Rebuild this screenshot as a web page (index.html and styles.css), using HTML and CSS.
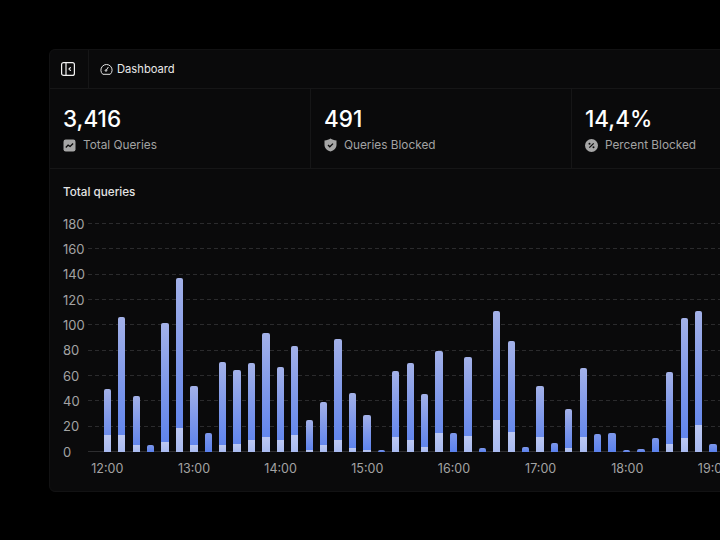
FILE: index.html
```html
<!DOCTYPE html>
<html lang="en">

<head>
    <meta charset="UTF-8">
    <title>Dashboard</title>
    <link rel="stylesheet" href="styles.css">
</head>

<body>
    <div class="card">
        <header class="topbar">
            <div class="toggle">
                <svg width="14" height="14" viewBox="0 0 14 14" fill="none" stroke="#f2f2f2" stroke-width="1.2">
                    <rect x="0.6" y="0.6" width="12.8" height="12.8" rx="2"></rect>
                    <path d="M5 1v12"></path>
                    <path d="M9.4 5.6 8 7l1.4 1.4" stroke-linecap="round" stroke-linejoin="round"></path>
                </svg>
            </div>
            <div class="crumb">
                <svg width="13" height="13" viewBox="0 0 13 13" fill="none" stroke="#e4e4e4" stroke-width="1">
                    <path d="M2.800 11.300a5.600 5.600 0 1 1 7.400 0z" stroke-linejoin="round"></path>
                    <path d="M8.200 4.300 6.400 7" stroke-linecap="round"></path>
                    <circle cx="6" cy="7.500" r="0.800"></circle>
                </svg>
                <span>Dashboard</span>
            </div>
        </header>

        <section class="stats">
            <div class="stat">
                <div class="stat-value">3,416</div>
                <div class="stat-label">
                    <svg width="13" height="13" viewBox="-0.5 -0.5 13 13">
                        <rect width="12" height="12" rx="2.200" fill="#a6a6a6"></rect>
                        <path d="M2.300 8 4.600 5.600l2 1.400 3-3" fill="none" stroke="#0a0a0b" stroke-width="1.300"></path>
                    </svg>
                    <span>Total Queries</span>
                </div>
            </div>
            <div class="stat">
                <div class="stat-value">491</div>
                <div class="stat-label">
                    <svg width="13" height="14" viewBox="0 0 13 14">
                        <path d="M6.500 0.500c1.600 1.200 3.600 1.800 6 2v4.200c0 3.300-2.300 5.800-6 6.800-3.700-1-6-3.500-6-6.800V2.500c2.400-.2 4.400-.8 6-2z" fill="#a6a6a6"></path>
                        <path d="M4 7l1.800 1.800L9 5.600" fill="none" stroke="#0a0a0b" stroke-width="1.300"></path>
                    </svg>
                    <span>Queries Blocked</span>
                </div>
            </div>
            <div class="stat">
                <div class="stat-value">14,4%</div>
                <div class="stat-label">
                    <svg width="13" height="13" viewBox="0 0 13 13">
                        <circle cx="6.500" cy="6.500" r="6.500" fill="#a6a6a6"></circle>
                        <path d="M4.300 8.700l4.400-4.400" stroke="#0a0a0b" stroke-width="1.200"></path>
                        <circle cx="4.500" cy="4.700" r="1" fill="#0a0a0b"></circle>
                        <circle cx="8.500" cy="8.300" r="1" fill="#0a0a0b"></circle>
                    </svg>
                    <span>Percent Blocked</span>
                </div>
            </div>
        </section>

        <section class="chart">
            <h2 class="chart-title">Total queries</h2>
            <div class="plot">
                <div class="row"><span>180</span><i></i></div>
                <div class="row"><span>160</span><i></i></div>
                <div class="row"><span>140</span><i></i></div>
                <div class="row"><span>120</span><i></i></div>
                <div class="row"><span>100</span><i></i></div>
                <div class="row"><span>80</span><i></i></div>
                <div class="row"><span>60</span><i></i></div>
                <div class="row"><span>40</span><i></i></div>
                <div class="row"><span>20</span><i></i></div>
                <div class="row zero"><span>0</span><i></i></div>

                <div class="bars">
                    <div class="bar" style="height:62.7px"><b style="height:16.7px"></b></div>
                    <div class="bar" style="height:134.7px"><b style="height:16.7px"></b></div>
                    <div class="bar" style="height:56px"><b style="height:6.7px"></b></div>
                    <div class="bar short" style="height:6.7px"></div>
                    <div class="bar" style="height:128.7px"><b style="height:9.3px"></b></div>
                    <div class="bar" style="height:173.7px"><b style="height:24px"></b></div>
                    <div class="bar" style="height:66px"><b style="height:6.7px"></b></div>
                    <div class="bar short" style="height:18.3px"></div>
                    <div class="bar" style="height:89.7px"><b style="height:6.7px"></b></div>
                    <div class="bar" style="height:81.7px"><b style="height:8px"></b></div>
                    <div class="bar" style="height:88.7px"><b style="height:12px"></b></div>
                    <div class="bar" style="height:118.7px"><b style="height:15px"></b></div>
                    <div class="bar" style="height:85px"><b style="height:12px"></b></div>
                    <div class="bar" style="height:105.7px"><b style="height:16.7px"></b></div>
                    <div class="bar" style="height:31.7px"><b style="height:1.3px"></b></div>
                    <div class="bar" style="height:49.7px"><b style="height:6.7px"></b></div>
                    <div class="bar" style="height:113px"><b style="height:12px"></b></div>
                    <div class="bar" style="height:58.7px"><b style="height:4px"></b></div>
                    <div class="bar" style="height:36.3px"><b style="height:1.3px"></b></div>
                    <div class="bar short" style="height:2px"></div>
                    <div class="bar" style="height:80.7px"><b style="height:15px"></b></div>
                    <div class="bar" style="height:88.7px"><b style="height:12px"></b></div>
                    <div class="bar" style="height:57.7px"><b style="height:5px"></b></div>
                    <div class="bar" style="height:100.7px"><b style="height:18.3px"></b></div>
                    <div class="bar short" style="height:19px"></div>
                    <div class="bar" style="height:95px"><b style="height:15.7px"></b></div>
                    <div class="bar short" style="height:3.7px"></div>
                    <div class="bar" style="height:140.3px"><b style="height:32px"></b></div>
                    <div class="bar" style="height:110.3px"><b style="height:19.3px"></b></div>
                    <div class="bar short" style="height:4.7px"></div>
                    <div class="bar" style="height:66px"><b style="height:15px"></b></div>
                    <div class="bar short" style="height:8.3px"></div>
                    <div class="bar" style="height:42.7px"><b style="height:4px"></b></div>
                    <div class="bar" style="height:83.3px"><b style="height:15px"></b></div>
                    <div class="bar short" style="height:17.3px"></div>
                    <div class="bar short" style="height:18.3px"></div>
                    <div class="bar short" style="height:2px"></div>
                    <div class="bar short" style="height:3px"></div>
                    <div class="bar short" style="height:13.7px"></div>
                    <div class="bar" style="height:79.7px"><b style="height:7.7px"></b></div>
                    <div class="bar" style="height:133.7px"><b style="height:14px"></b></div>
                    <div class="bar" style="height:141px"><b style="height:26.7px"></b></div>
                    <div class="bar short" style="height:7.3px"></div>
                </div>
            </div>
            <div class="times">
                <span>12:00</span>
                <span>13:00</span>
                <span>14:00</span>
                <span>15:00</span>
                <span>16:00</span>
                <span>17:00</span>
                <span>18:00</span>
                <span>19:00</span>
            </div>
        </section>
    </div>
</body>

</html>
```

FILE: styles.css
```css
html,
body {
    height: 100%;
    overflow: hidden;
}

body {
    margin: 0;
    padding: 49px 0 0 49px;
    box-sizing: border-box;
    background: #000;
    color: #fff;
    font-family: Inter, "Noto Sans", sans-serif;
}

.card {
    width: 800px;
    height: 443px;
    box-sizing: border-box;
    background: #0a0a0b;
    border: 1px solid #121213;
    border-radius: 6px;
}

.topbar {
    display: flex;
    height: 38px;
    border-bottom: 1px solid #161617;
}

.toggle {
    display: flex;
    align-items: center;
    justify-content: center;
    width: 39px;
    padding-right: 2px;
    box-sizing: border-box;
    border-right: 1px solid #161617;
}

.crumb {
    display: flex;
    align-items: center;
    gap: 4px;
    padding-left: 11px;
    font-size: 11.2px;
    color: #e8e8e8;
}

.stats {
    display: flex;
    height: 79px;
    border-bottom: 1px solid #161617;
}

.stat {
    width: 261px;
    box-sizing: border-box;
    padding: 18px 0 0 13px;
    border-right: 1px solid #161617;
}

.stat-value {
    font-size: 22.5px;
    font-weight: 500;
    line-height: 24px;
}

.stat-label {
    display: flex;
    align-items: center;
    gap: 7px;
    margin-top: 7px;
    font-size: 11.8px;
    color: #a3a3a3;
}

.chart {
    padding: 15px 0 0 13px;
}

.chart-title {
    margin: 0 0 11px;
    font-size: 11.7px;
    font-weight: 500;
    line-height: 16px;
    color: #e4e4e4;
}

.plot {
    position: relative;
}

.row {
    display: flex;
    align-items: center;
    height: 25.33px;
    font-size: 13px;
    color: #a3a3a3;
}

.row span {
    width: 25px;
}

.row i {
    flex: 1;
    height: 1px;
    background: repeating-linear-gradient(90deg, #2b2b2d 0 4px, transparent 4px 7px);
}

.row.zero i {
    background: #2e2e30;
}

.bars {
    position: absolute;
    left: 40.7px;
    bottom: 12.7px;
    display: flex;
    align-items: flex-end;
    gap: 7.14px;
}

.bar {
    display: flex;
    flex-direction: column;
    justify-content: flex-end;
    width: 7.3px;
    border-radius: 2px 2px 0 0;
    overflow: hidden;
    background: linear-gradient(#a3b1e8, #7d97ea 50%, #5a81ed);
}

.bar.short {
    background: linear-gradient(#7d97ea, #5a81ed);
}

.bar b {
    display: block;
    background: linear-gradient(#bcc8f2, #a8baf0);
}

.times {
    display: flex;
    margin: -3px 0 0 1px;
    font-size: 12.5px;
    color: #a3a3a3;
}

.times span {
    flex: none;
    width: 86.67px;
    text-align: center;
}
```
